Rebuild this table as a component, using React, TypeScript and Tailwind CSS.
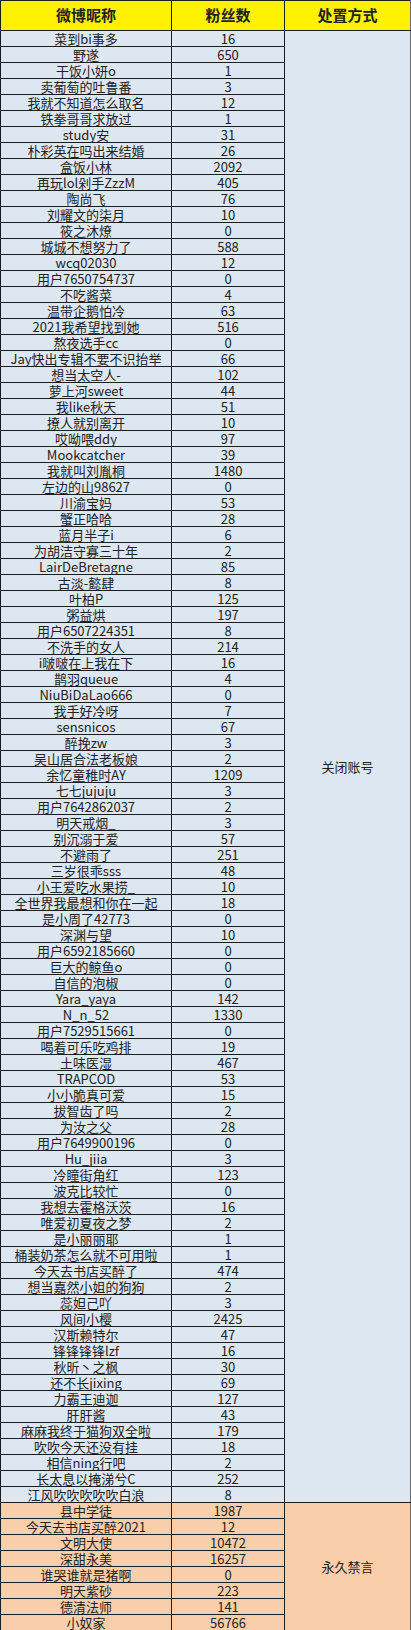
import React from "react";

type Row = [string, string];

const closed: Row[] = [
  ["菜到bi事多", "16"], ["野遂", "650"], ["干饭小妍o", "1"], ["卖葡萄的吐鲁番", "3"],
  ["我就不知道怎么取名", "12"], ["铁拳哥哥求放过", "1"], ["study安", "31"], ["朴彩英在吗出来结婚", "26"],
  ["盒饭小林", "2092"], ["再玩lol剁手ZzzM", "405"], ["陶尚飞", "76"], ["刘耀文的柒月", "10"],
  ["筱之沐燎", "0"], ["城城不想努力了", "588"], ["wcq02030", "12"], ["用户7650754737", "0"],
  ["不吃酱菜", "4"], ["温带企鹅怕冷", "63"], ["2021我希望找到她", "516"], ["熬夜选手cc", "0"],
  ["Jay快出专辑不要不识抬举", "66"], ["想当太空人-", "102"], ["萝上河sweet", "44"], ["我like秋天", "51"],
  ["撩人就别离开", "10"], ["哎呦喂ddy", "97"], ["Mookcatcher", "39"], ["我就叫刘胤桐", "1480"],
  ["左边的山98627", "0"], ["川渝宝妈", "53"], ["蟹正哈哈", "28"], ["蓝月半子i", "6"],
  ["为胡洁守寡三十年", "2"], ["LairDeBretagne", "85"], ["古淡-懿肆", "8"], ["叶柏P", "125"],
  ["粥益烘", "197"], ["用户6507224351", "8"], ["不洗手的女人", "214"], ["i啵啵在上我在下", "16"],
  ["鹊羽queue", "4"], ["NiuBiDaLao666", "0"], ["我手好冷呀", "7"], ["sensnicos", "67"],
  ["醉挽zw", "3"], ["吴山居合法老板娘", "2"], ["余忆童稚时AY", "1209"], ["七七jujuju", "3"],
  ["用户7642862037", "2"], ["明天戒烟_", "3"], ["别沉溺于爱", "57"], ["不避雨了", "251"],
  ["三岁很乖sss", "48"], ["小王爱吃水果捞_", "10"], ["全世界我最想和你在一起", "18"], ["是小周了42773", "0"],
  ["深渊与望", "10"], ["用户6592185660", "0"], ["巨大的鲸鱼o", "0"], ["自信的泡椒", "0"],
  ["Yara_yaya", "142"], ["N_n_52", "1330"], ["用户7529515661", "0"], ["喝着可乐吃鸡排", "19"],
  ["土味医湿", "467"], ["TRAPCOD", "53"], ["小小脆真可爱", "15"], ["拔智齿了吗", "2"],
  ["为汝之父", "28"], ["用户7649900196", "0"], ["Hu_jiia", "3"], ["冷瞳街角红", "123"],
  ["波克比较忙", "0"], ["我想去霍格沃茨", "16"], ["唯爱初夏夜之梦", "2"], ["是小丽丽耶", "1"],
  ["桶装奶茶怎么就不可用啦", "1"], ["今天去书店买醉了", "474"], ["想当嘉然小姐的狗狗", "2"], ["蕊妲己吖", "3"],
  ["风间小樱", "2425"], ["汉斯赖特尔", "47"], ["锋锋锋锋lzf", "16"], ["秋昕丶之枫", "30"],
  ["还不长jixing", "69"], ["力霸王迪迦", "127"], ["肝肝酱", "43"], ["麻麻我终于猫狗双全啦", "179"],
  ["吹吹今天还没有挂", "18"], ["相信ning行吧", "2"], ["长太息以掩涕兮C", "252"], ["江风吹吹吹吹吹白浪", "8"],
];

const banned: Row[] = [
  ["县中学徒", "1987"], ["今天去书店买醉2021", "12"], ["文明大使", "10472"], ["深甜永美", "16257"],
  ["谁哭谁就是猪啊", "0"], ["明天紫砂", "223"], ["德清法师", "141"], ["小奴家", "56766"],
];

const font = { fontFamily: '"Noto Sans CJK SC", "Noto Sans", sans-serif' };

function Section({ rows, label, bg }: { rows: Row[]; label: string; bg: string }) {
  return (
    <>
      {rows.map(([name, fans], i) => (
        <tr key={name} className="h-[16px]">
          <td className={`${bg} border border-[#1c1c1c] p-0 text-center text-[13px] leading-[15px] text-[#222] whitespace-nowrap`}>
            {name}
          </td>
          <td className={`${bg} border border-[#1c1c1c] p-0 text-center text-[13px] leading-[15px] text-[#222]`}>
            {fans}
          </td>
          {i === 0 && (
            <td
              rowSpan={rows.length}
              className={`${bg} border border-[#1c1c1c] border-r-[#6b6b6b] p-0 text-center text-[13px] text-[#222]`}
            >
              {label}
            </td>
          )}
        </tr>
      ))}
    </>
  );
}

export default function App() {
  return (
    <div className="w-[411px] bg-white" style={font}>
      <table className="w-[410px] table-fixed border-collapse">
        <colgroup>
          <col className="w-[171px]" />
          <col className="w-[113px]" />
          <col className="w-[126px]" />
        </colgroup>
        <thead>
          <tr className="h-[30px]">
            <th className="bg-[#fef200] border border-[#1c1c1c] p-0 text-center text-[15px] font-bold text-[#222]">微博昵称</th>
            <th className="bg-[#fef200] border border-[#1c1c1c] p-0 text-center text-[15px] font-bold text-[#222]">粉丝数</th>
            <th className="bg-[#fef200] border border-[#1c1c1c] border-r-[#6b6b6b] p-0 text-center text-[15px] font-bold text-[#222]">处置方式</th>
          </tr>
        </thead>
        <tbody>
          <Section rows={closed} label="关闭账号" bg="bg-[#dde7f1]" />
          <Section rows={banned} label="永久禁言" bg="bg-[#f9cfab]" />
        </tbody>
      </table>
    </div>
  );
}
